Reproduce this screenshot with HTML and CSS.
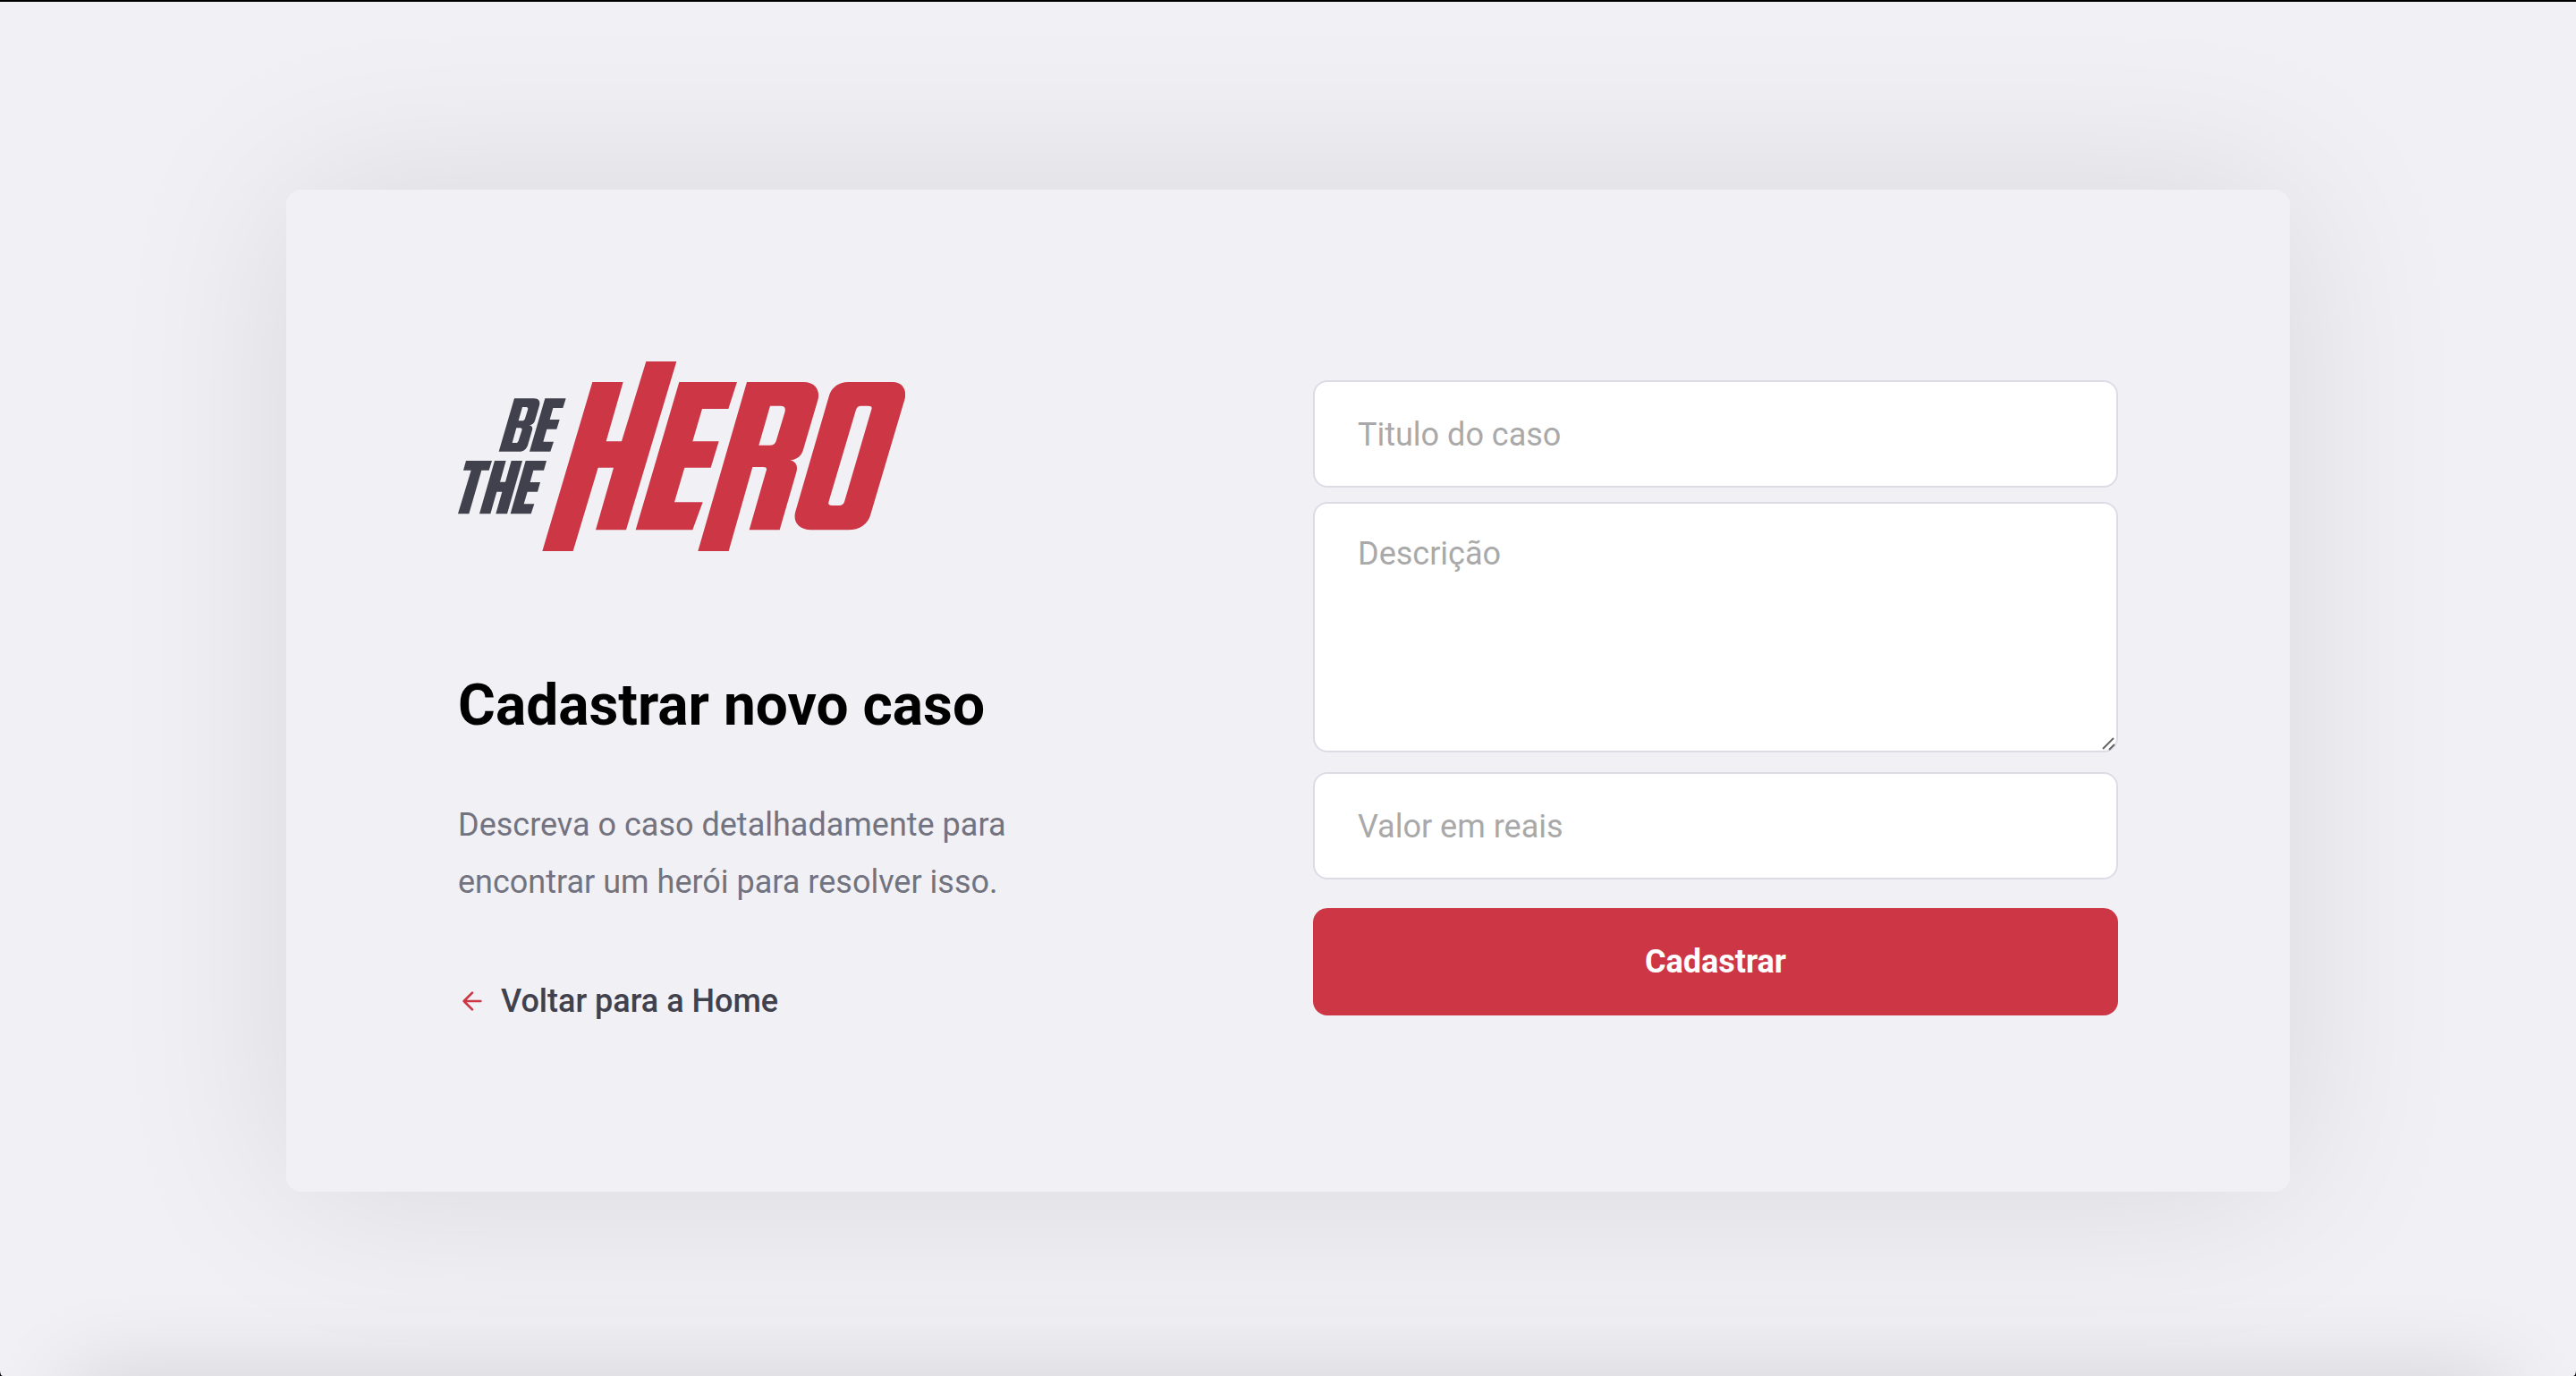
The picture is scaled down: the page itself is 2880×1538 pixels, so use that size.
FILE: index.html
```html
<!DOCTYPE html>
<html lang="pt-BR">
<head>
  <meta charset="utf-8">
  <meta name="viewport" content="width=device-width, initial-scale=1">
  <title>Be The Hero</title>
  <link rel="stylesheet" href="styles.css">
</head>
<body>
  <div class="page">
    <main class="card">
      <section class="intro">
        <svg class="logo" viewBox="36 42 1500 636" role="img" aria-label="Be The Hero">
          <g fill="#41414d" fill-rule="evenodd">
            <path d="M225 166H290C307 166 313 175 309 190L295 238C292 249 286 255 275 256C285 258 288 265 284 275L271 320C266 336 256 344 242 344H173ZM252 195L239 241H250C256 241 259 239 261 233L270 205C272 199 271 195 264 195ZM232 265L218 315H230C235 315 237 313 239 308L250 274C252 268 250 265 244 265Z"/>
            <path d="M328 166H398L388 198H355L344 237H377L367 269H334L322 311H357L346 344H276Z"/>
            <path d="M63 375H150L140 407H115L73 553H36L80 407H54Z"/>
            <path d="M159 375H197L177 446H195L215 375H252L201 553H163L184 479H166L145 553H108Z"/>
            <path d="M263 375H333L324 407H289L278 447H312L303 479H269L257 520H292L281 553H212Z"/>
          </g>
          <g fill="#cd3645" fill-rule="evenodd">
            <path d="M487 111H590L533 310H585L667 42H769L600 607H498L558 398H506L422 678H319Z"/>
            <path d="M778 111H972L943 201H855L823 310H911L884 398H796L762 514H857L823 607H632Z"/>
            <path d="M1005 111H1195C1235 111 1252 140 1243 172L1194 338C1188 358 1175 371 1150 373C1170 378 1177 392 1171 413L1115 607H1013L1069 412C1074 400 1070 396 1060 396H1024L944 678H841ZM1083 191L1045 323H1084C1093 323 1100 319 1104 306L1132 213C1136 197 1132 191 1118 191Z"/>
            <path d="M1345 111H1495C1528 111 1543 140 1534 170L1420 555C1411 588 1384 607 1345 607H1220C1180 607 1158 580 1168 545L1282 153C1291 128 1315 111 1345 111ZM1388 191C1379 191 1374 195 1371 204L1280 511C1277 521 1279 525 1290 525H1315C1323 525 1329 521 1332 513L1422 206C1426 196 1424 191 1412 191Z"/>
          </g>
        </svg>
        <h1 class="title">Cadastrar novo caso</h1>
        <p class="text">Descreva o caso detalhadamente para encontrar um herói para resolver isso.</p>
        <a class="back-link" href="#">
          <svg class="back-icon" viewBox="0 0 24 24" aria-hidden="true">
            <path d="M19 12H5M12 19L5 12L12 5"/>
          </svg>
          Voltar para a Home
        </a>
      </section>

      <form class="form">
        <input class="field" type="text" placeholder="Titulo do caso" aria-label="Titulo do caso">
        <div class="area-wrap">
          <textarea class="field area" placeholder="Descrição" aria-label="Descrição"></textarea>
          <svg class="grip" viewBox="0 0 16 16" aria-hidden="true">
            <path d="M1 14L13 2M8 15L14 9"/>
          </svg>
        </div>
        <input class="field" type="text" placeholder="Valor em reais" aria-label="Valor em reais">
        <button class="button" type="submit">Cadastrar</button>
      </form>
    </main>
  </div>
</body>
</html>
```
FILE: styles.css
```css
* {
  box-sizing: border-box;
  margin: 0;
  padding: 0;
}

html {
  background: #000;
}

body,
input,
textarea,
button {
  font: 400 36px/42px Roboto, sans-serif;
}

.page {
  position: relative;
  display: flex;
  align-items: center;
  justify-content: center;
  min-height: 100vh;
  padding: 36px 32px 32px;
  overflow: hidden;
  background: #f0f0f5;
  border-top: 2px solid #000;
  border-radius: 0 0 3px 3px / 0 0 6px 6px;
}

/* Soft shadow rising from the bottom edge */
.page::after {
  content: "";
  position: absolute;
  top: 100%;
  left: 80px;
  right: 80px;
  height: 100px;
  box-shadow: 0 0 100px rgba(0, 0, 0, 0.13);
  pointer-events: none;
}

.card {
  display: flex;
  flex-wrap: wrap;
  align-items: center;
  justify-content: space-between;
  gap: 64px;
  width: 100%;
  max-width: 2240px;
  padding: 192px;
  background: #f0f0f5;
  border-radius: 16px;
  box-shadow: 0 0 200px rgba(0, 0, 0, 0.1);
}

.intro {
  width: 100%;
  max-width: 760px;
}

.logo {
  display: block;
  width: 500px;
  max-width: 100%;
}

.title {
  margin: 136px 0 64px;
  font-size: 64px;
  line-height: 74px;
  font-weight: 700;
  color: #000;
}

.text {
  line-height: 64px;
  color: #737380;
}

.back-link {
  display: flex;
  align-items: center;
  gap: 16px;
  width: fit-content;
  margin-top: 80px;
  font-weight: 500;
  color: #41414d;
  text-decoration: none;
}

.back-icon {
  width: 32px;
  height: 32px;
  fill: none;
  stroke: #cd3645;
  stroke-width: 2;
  stroke-linecap: round;
  stroke-linejoin: round;
}

.form {
  display: flex;
  flex-direction: column;
  width: 100%;
  max-width: 900px;
  padding-top: 16px;
}

.field {
  display: block;
  width: 100%;
  height: 120px;
  padding: 2px 48px 0;
  color: #333;
  background: #fff;
  border: 2px solid #dcdce6;
  border-radius: 16px;
}

.field::placeholder {
  color: #a9a9a9;
}

.area-wrap {
  position: relative;
  margin: 16px 0 22px;
}

.area {
  height: 280px;
  min-height: 280px;
  padding-top: 32px;
  padding-bottom: 32px;
  line-height: 48px;
  resize: vertical;
}

.area::-webkit-resizer {
  background: transparent;
}

.grip {
  position: absolute;
  right: 2px;
  bottom: 2px;
  width: 16px;
  height: 16px;
  fill: none;
  stroke: #666;
  stroke-width: 2;
  pointer-events: none;
}

.button {
  height: 120px;
  margin-top: 32px;
  font-weight: 700;
  color: #fff;
  background: #cd3645;
  border: 0;
  border-radius: 16px;
  cursor: pointer;
}
```
